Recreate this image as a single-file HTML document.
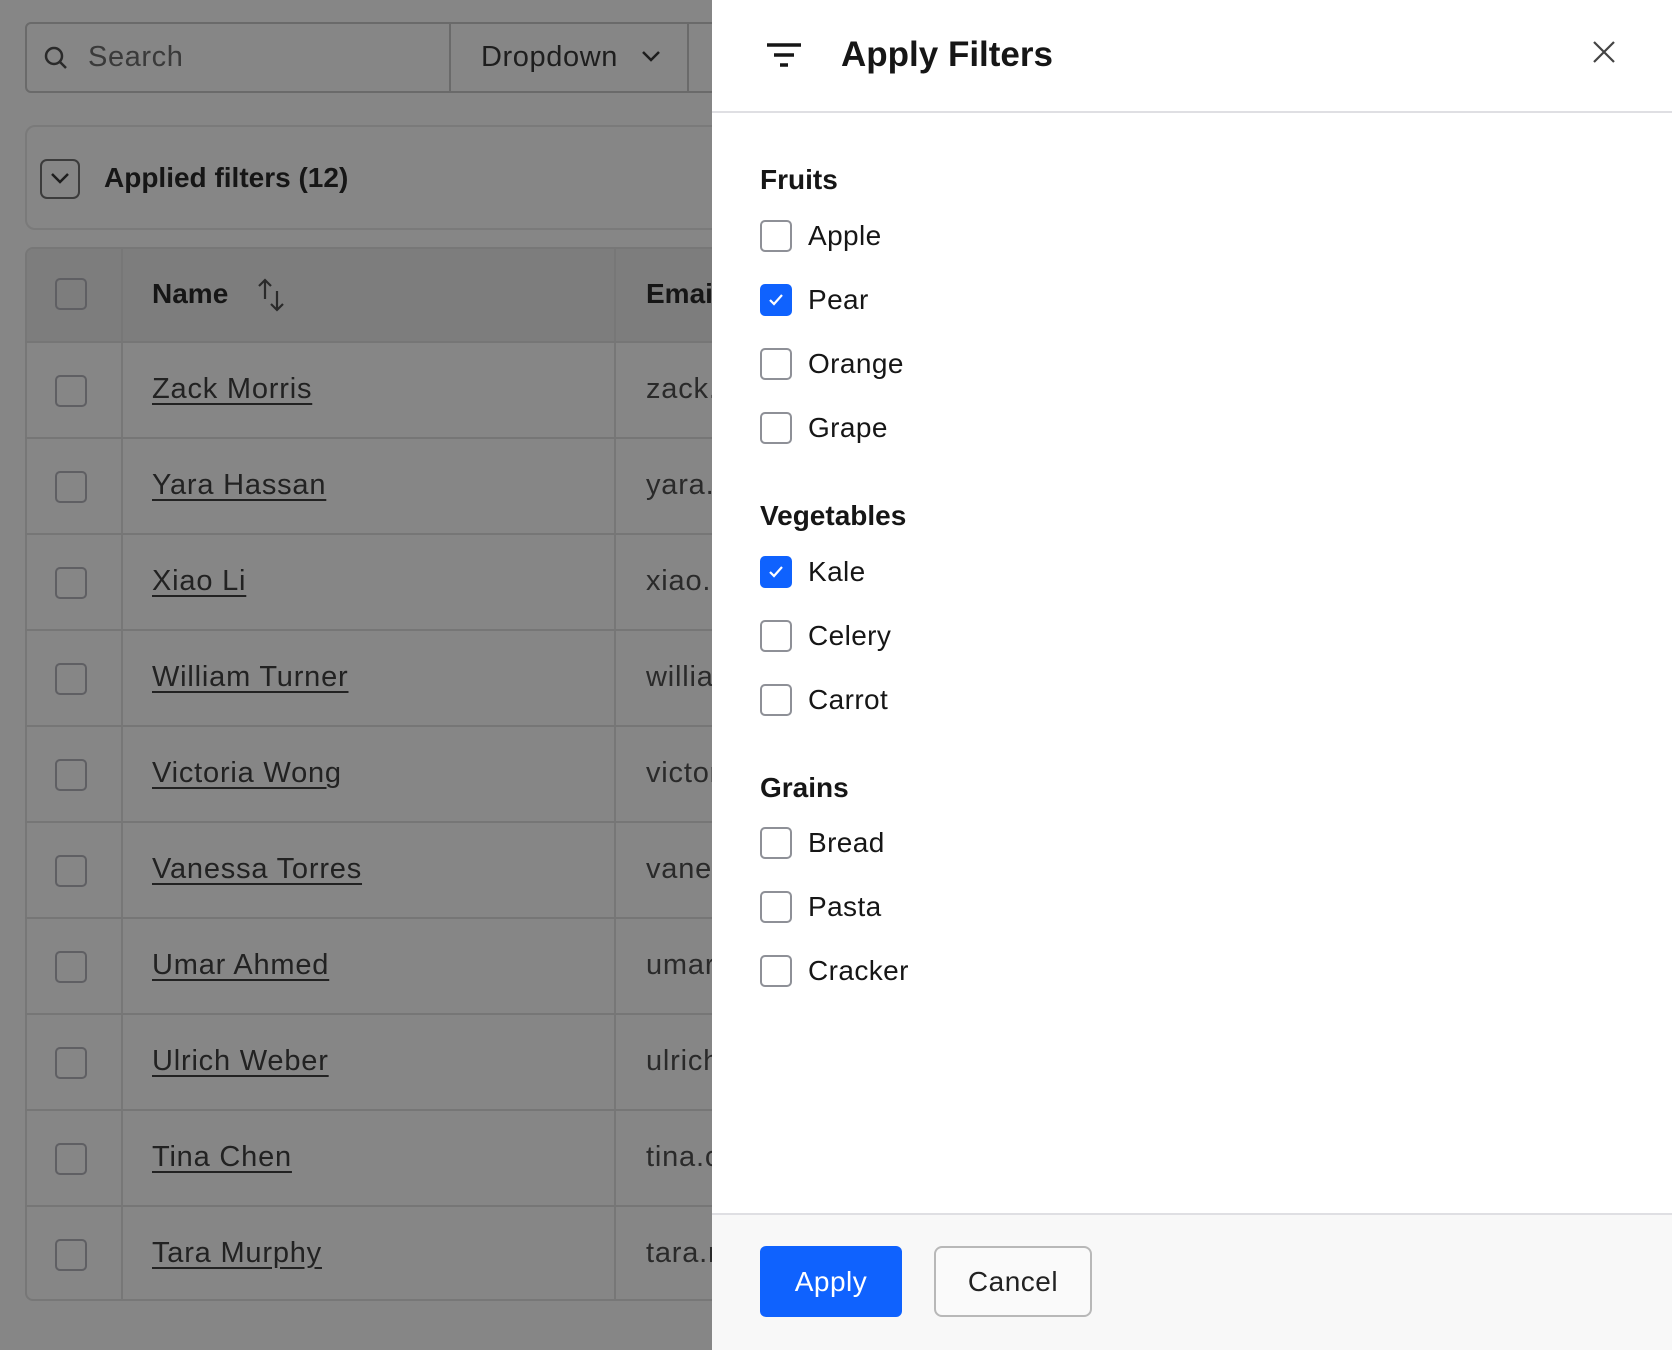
<!DOCTYPE html>
<html><head><meta charset="utf-8"><style>
*{box-sizing:border-box;margin:0;padding:0}
body{width:1672px;height:1350px;overflow:hidden;background:#868686;font-family:"Liberation Sans",sans-serif;position:relative}
.a{position:absolute}
.cb{position:absolute;width:32px;height:32px;border:2px solid #5f5f63;border-radius:5px}
.row{position:absolute;left:25px;width:700px;height:96px;border-top:2px solid #767676}
.row .cb{left:30px;top:32px}
.row .n{position:absolute;left:127px;top:30px;font-size:29px;letter-spacing:0.8px;color:#222;text-decoration:underline;text-underline-offset:5px}
.row .e{position:absolute;left:621px;top:30px;font-size:29px;letter-spacing:0.8px;color:#2a2a2a}
.pc{position:absolute;width:32px;height:32px;border:2px solid #8e9097;border-radius:5px;background:#fff}
.pc.on{background:#0f62fe;border-color:#0f62fe}
.lb{position:absolute;left:808px;font-size:28px;letter-spacing:0.4px;color:#161616}
.hd{position:absolute;left:760px;font-size:28px;font-weight:bold;color:#161616}
</style></head><body>
<div class="a" style="left:25px;top:22px;width:700px;height:71px;border:2px solid #6a6a6a;border-radius:6px"></div>
<svg class="a" style="left:42px;top:44px" width="28" height="28" viewBox="0 0 28 28"><circle cx="12" cy="12" r="8" fill="none" stroke="#2a2a2a" stroke-width="2.5"/><path d="M18 18l6 6" stroke="#2a2a2a" stroke-width="2.5"/></svg>
<div class="a" style="left:88px;top:41px;font-size:29px;letter-spacing:0.6px;color:#3a3a3a">Search</div>
<div class="a" style="left:449px;top:24px;width:2px;height:67px;background:#6a6a6a"></div>
<div class="a" style="left:687px;top:24px;width:2px;height:67px;background:#6a6a6a"></div>
<div class="a" style="left:481px;top:41px;font-size:29px;letter-spacing:0.6px;color:#1e1e1e">Dropdown</div>
<svg class="a" style="left:640px;top:48px" width="22" height="16" viewBox="0 0 22 16"><path d="M3 4l8 8 8-8" fill="none" stroke="#1e1e1e" stroke-width="2.5"/></svg>
<div class="a" style="left:25px;top:125px;width:700px;height:105px;border:2px solid #7a7a7a;border-radius:10px"></div>
<div class="a" style="left:40px;top:159px;width:40px;height:40px;border:2px solid #3c3c3c;border-radius:7px"></div>
<svg class="a" style="left:48px;top:170px" width="24" height="16" viewBox="0 0 24 16"><path d="M4 4l8 8 8-8" fill="none" stroke="#1e1e1e" stroke-width="2.5"/></svg>
<div class="a" style="left:104px;top:162px;font-size:28px;font-weight:bold;color:#161616">Applied filters (12)</div>
<div class="a" style="left:25px;top:247px;width:700px;height:1054px;border:2px solid #777;border-radius:8px;overflow:hidden">
<div class="a" style="left:0;top:0;width:700px;height:94px;background:#7d7d7d"></div>
<div class="a" style="left:94px;top:0;width:2px;height:1054px;background:#777"></div>
<div class="a" style="left:587px;top:0;width:2px;height:1054px;background:#777"></div>
</div>
<div class="cb" style="left:55px;top:278px"></div>
<div class="a" style="left:152px;top:278px;font-size:28px;font-weight:bold;color:#161616">Name</div>
<svg class="a" style="left:256px;top:277px" width="32" height="36" viewBox="0 0 32 36"><path d="M9 22V3M3 9l6-6 6 6M21 14v19M15 27l6 6 6-6" fill="none" stroke="#2a2a2a" stroke-width="2.2"/></svg>
<div class="a" style="left:646px;top:278px;font-size:28px;font-weight:bold;color:#161616">Email</div>
<div class="row" style="top:341px"><div class="cb"></div><div class="n">Zack Morris</div><div class="e">zack.morris</div></div>
<div class="row" style="top:437px"><div class="cb"></div><div class="n">Yara Hassan</div><div class="e">yara.hassan</div></div>
<div class="row" style="top:533px"><div class="cb"></div><div class="n">Xiao Li</div><div class="e">xiao.li</div></div>
<div class="row" style="top:629px"><div class="cb"></div><div class="n">William Turner</div><div class="e">william</div></div>
<div class="row" style="top:725px"><div class="cb"></div><div class="n">Victoria Wong</div><div class="e">victoria</div></div>
<div class="row" style="top:821px"><div class="cb"></div><div class="n">Vanessa Torres</div><div class="e">vanessa</div></div>
<div class="row" style="top:917px"><div class="cb"></div><div class="n">Umar Ahmed</div><div class="e">umar</div></div>
<div class="row" style="top:1013px"><div class="cb"></div><div class="n">Ulrich Weber</div><div class="e">ulrich</div></div>
<div class="row" style="top:1109px"><div class="cb"></div><div class="n">Tina Chen</div><div class="e">tina.chen</div></div>
<div class="row" style="top:1205px"><div class="cb"></div><div class="n">Tara Murphy</div><div class="e">tara.m</div></div>

<div class="a" style="left:712px;top:0;width:960px;height:1350px;background:#fff"></div>
<div class="a" style="left:712px;top:111px;width:960px;height:2px;background:#dfdfe3"></div>
<div class="a" style="left:712px;top:1213px;width:960px;height:137px;background:#f8f8f8;border-top:2px solid #dfdfe3"></div>
<svg class="a" style="left:766px;top:42px" width="36" height="28" viewBox="0 0 36 28"><path d="M1 3h34M8 13h20M14 23h8" stroke="#161616" stroke-width="3.5"/></svg>
<div class="a" style="left:841px;top:35px;font-size:35px;font-weight:bold;color:#161616">Apply Filters</div>
<svg class="a" style="left:1592px;top:40px" width="24" height="24" viewBox="0 0 24 24"><path d="M2 2l20 20M22 2L2 22" stroke="#444" stroke-width="2.2"/></svg>

<div class="hd" style="top:164px">Fruits</div>
<div class="pc" style="left:760px;top:220px"></div><div class="lb" style="top:220px">Apple</div>
<div class="pc on" style="left:760px;top:284px"><svg width="28" height="28" viewBox="0 0 28 28"><path d="M8 14l4 4 8-9" fill="none" stroke="#fff" stroke-width="2.2"/></svg></div><div class="lb" style="top:284px">Pear</div>
<div class="pc" style="left:760px;top:348px"></div><div class="lb" style="top:348px">Orange</div>
<div class="pc" style="left:760px;top:412px"></div><div class="lb" style="top:412px">Grape</div>
<div class="hd" style="top:500px">Vegetables</div>
<div class="pc on" style="left:760px;top:556px"><svg width="28" height="28" viewBox="0 0 28 28"><path d="M8 14l4 4 8-9" fill="none" stroke="#fff" stroke-width="2.2"/></svg></div><div class="lb" style="top:556px">Kale</div>
<div class="pc" style="left:760px;top:620px"></div><div class="lb" style="top:620px">Celery</div>
<div class="pc" style="left:760px;top:684px"></div><div class="lb" style="top:684px">Carrot</div>
<div class="hd" style="top:772px">Grains</div>
<div class="pc" style="left:760px;top:827px"></div><div class="lb" style="top:827px">Bread</div>
<div class="pc" style="left:760px;top:891px"></div><div class="lb" style="top:891px">Pasta</div>
<div class="pc" style="left:760px;top:955px"></div><div class="lb" style="top:955px">Cracker</div>

<div class="a" style="left:760px;top:1246px;width:142px;height:71px;background:#0f62fe;border-radius:6px;color:#fff;font-size:28px;letter-spacing:0.5px;text-align:center;line-height:71px">Apply</div>
<div class="a" style="left:934px;top:1246px;width:158px;height:71px;background:#fafafa;border:2px solid #b8b8b8;border-radius:8px;color:#222;font-size:28px;letter-spacing:0.5px;text-align:center;line-height:67px">Cancel</div>
</body></html>
